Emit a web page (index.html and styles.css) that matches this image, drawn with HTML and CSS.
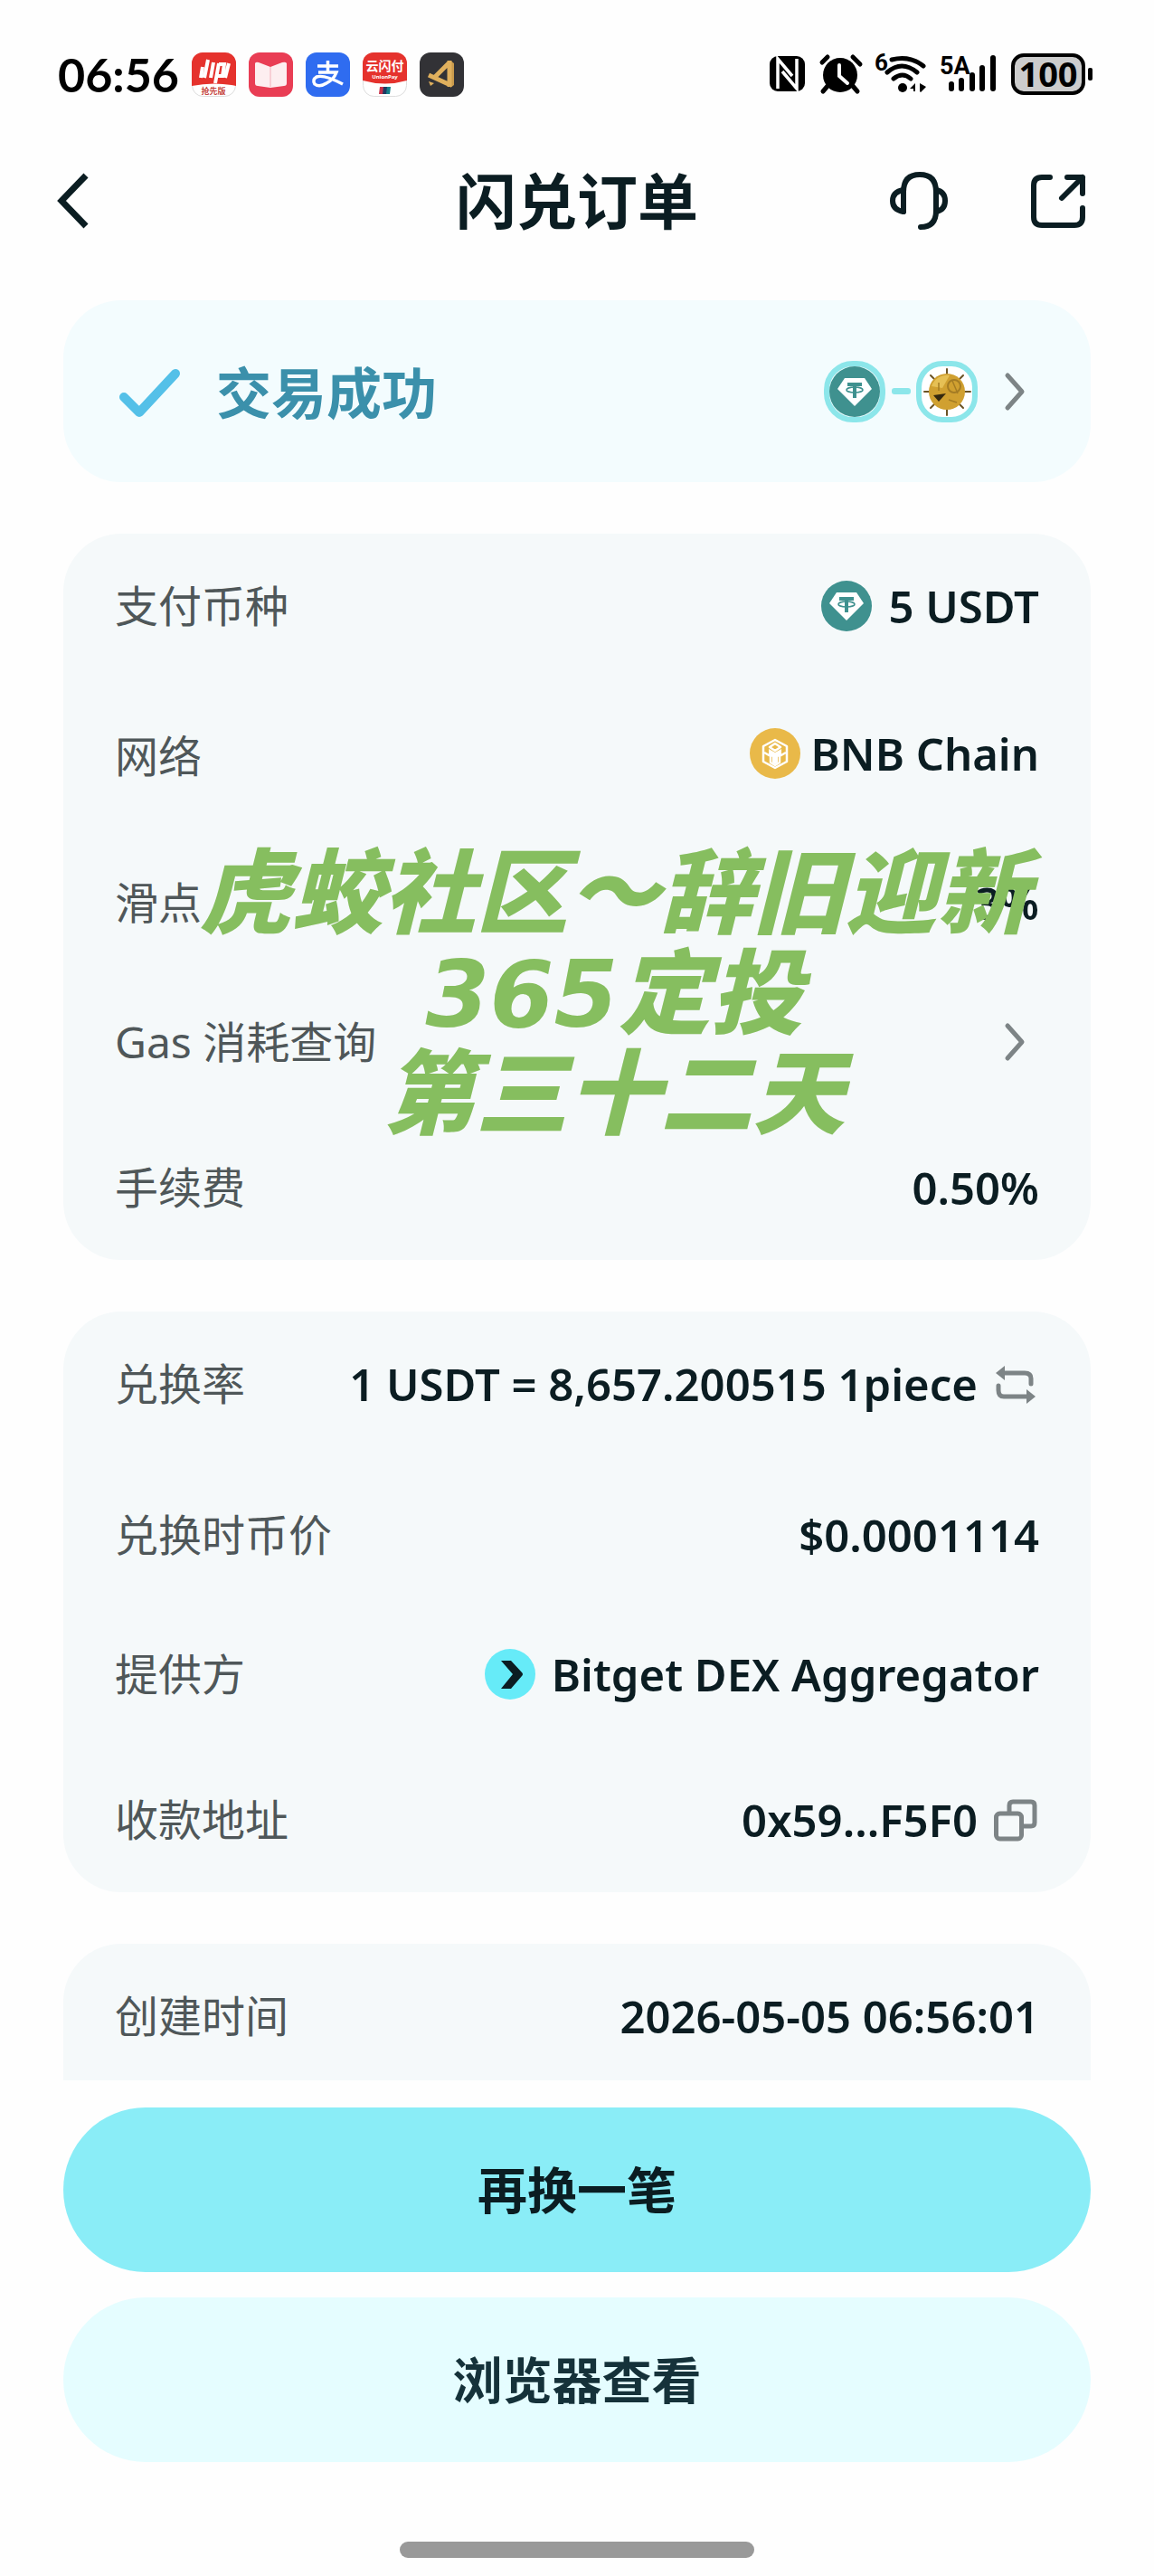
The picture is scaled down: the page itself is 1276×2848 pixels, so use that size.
FILE: index.html
```html
<!DOCTYPE html>
<html lang="zh-CN">
<head>
<meta charset="utf-8">
<meta name="viewport" content="width=device-width, initial-scale=1">
<title>闪兑订单</title>
<link rel="stylesheet" href="styles.css">
</head>
<body>
<svg class="defs" aria-hidden="true">
  <symbol id="usdt" viewBox="0 0 56 56">
    <circle cx="28" cy="28" r="28" fill="#3f918f"/>
    <path d="M17 13h22l8 12-19 19L9 25z" fill="#fff"/>
    <path d="M20 18h16v4h-6v13h-4V22h-6z" fill="#3f918f"/>
    <ellipse cx="28" cy="26" rx="9" ry="3" fill="none" stroke="#3f918f" stroke-width="1.6"/>
  </symbol>
  <symbol id="chevron" viewBox="0 0 48 48">
    <path d="M15 6l16 18-16 18" fill="none" stroke="currentColor" stroke-width="5" stroke-linecap="round" stroke-linejoin="round"/>
  </symbol>
</svg>

<div class="status">
  <div class="status-side">
    <time class="clock">06:56</time>
    <div class="apps">
      <svg class="app" viewBox="0 0 49 49" aria-hidden="true">
        <rect x=".5" y=".5" width="48" height="48" rx="12" fill="#fff" stroke="#ddd"/>
        <path d="M0 37V12A12 12 0 0 1 12 0h25a12 12 0 0 1 12 12v25q-24-5-49 0z" fill="#e5322d"/>
        <path d="M12 16l-2 12M18 8l-4 20M24 11l-3 17M30 12l-4 22M30 13h6l-2 13h-6M41 12l-4 16" fill="none" stroke="#fff" stroke-width="4"/>
        <text x="24" y="46" text-anchor="middle" font-size="9" font-weight="700" fill="#c5453e">抢先版</text>
      </svg>
      <svg class="app" viewBox="0 0 49 49" aria-hidden="true">
        <rect width="49" height="49" rx="12" fill="#e93d54"/>
        <path d="M7 12q1-2 4-1l13 5 13-5q4-1 5 1v22q0 3-3 3l-15 2-14-2q-3 0-3-3z" fill="#fdeef0"/>
        <path d="M24 16v22" stroke="#f6c5cc" stroke-width="1.5"/>
      </svg>
      <svg class="app" viewBox="0 0 49 49" aria-hidden="true">
        <rect width="49" height="49" rx="12" fill="#2f6cf0"/>
        <path d="M13 15h23M24.500 9v13M14 22h20q-3 8-11 12-8 5-13 1-3-5 2-8 8-3 29 8" fill="none" stroke="#fff" stroke-width="3.500"/>
      </svg>
      <svg class="app" viewBox="0 0 49 49" aria-hidden="true">
        <rect x=".5" y=".5" width="48" height="48" rx="12" fill="#fff" stroke="#ddd"/>
        <path d="M0 31V12A12 12 0 0 1 12 0h25a12 12 0 0 1 12 12v19q-24 7-49 0z" fill="#e5322d"/>
        <text x="24.500" y="20" text-anchor="middle" font-size="14" font-weight="700" fill="#fff">云闪付</text>
        <text x="24.500" y="29" text-anchor="middle" font-size="6" font-weight="700" fill="#fff">UnionPay</text>
        <path d="M19 38h5l-1 8h-5z" fill="#c8324a"/><path d="M23 38h5l-1 8h-5z" fill="#1f3b63"/><path d="M27 38h4l-1 8h-4z" fill="#15808a"/>
      </svg>
      <svg class="app" viewBox="0 0 49 49" aria-hidden="true">
        <rect width="49" height="49" rx="12" fill="#323236"/>
        <path d="M34 9v30l4-3V12z" fill="#c99a4c"/>
        <path d="M32 12L15 29M10 25l24 11M33 9v29" fill="none" stroke="#e0b05d" stroke-width="5"/>
        <path d="M10 32l6 2-4 3z" fill="#e0b05d"/>
      </svg>
    </div>
  </div>
  <svg class="signals" viewBox="0 0 360 50" aria-hidden="true">
    <rect x="1" y="5" width="39" height="39" rx="9"/>
    <path d="M10 41V8l16 19M31 8v33L15 22" fill="none" stroke="#fff" stroke-width="3.500"/>
    <circle cx="79" cy="26" r="19"/>
    <path d="M66 37l-6 7M92 37l6 7M59 12l6-6M93 6l8 8" stroke="#000" stroke-width="5" stroke-linecap="round"/>
    <path d="M78 15v12l9 8" fill="none" stroke="#fff" stroke-width="4" stroke-linecap="round"/>
    <g fill="none" stroke="#000" stroke-width="5" stroke-linecap="round">
      <path d="M136 9q20-5 35 7M131 23q16-14 33 0M138 30q10-8 19 0"/>
    </g>
    <circle cx="148" cy="40" r="5"/>
    <path d="M156 41l6-6v9h-2v-3zM167 35l7 4-6 6-1-1z"/>
    <text class="net" x="117" y="21" font-size="26">6</text>
    <text class="net" x="189" y="25" font-size="27">5A</text>
    <path d="M202 36v5M213 32v9M225 26v15M236 18v23M248 7v34" stroke="#000" stroke-width="6" stroke-linecap="round"/>
    <rect x="270" y="4" width="78" height="42" rx="12" fill="#ccc" stroke="#000" stroke-width="4"/>
    <rect x="353" y="18" width="5" height="14" rx="2"/>
    <text x="309" y="39" text-anchor="middle" font-size="38" font-weight="700">100</text>
  </svg>
</div>

<header class="topbar">
  <button class="icon-btn" type="button" aria-label="返回">
    <svg viewBox="0 0 64 64"><path d="M33 4L6 32l27 28" fill="none" stroke="currentColor" stroke-width="7"/></svg>
  </button>
  <h1>闪兑订单</h1>
  <div class="actions">
    <button class="icon-btn" type="button" aria-label="客服">
      <svg viewBox="0 0 64 64"><g fill="none" stroke="currentColor" stroke-width="6" stroke-linecap="round" stroke-linejoin="round"><path d="M15 44V22Q15 3 33 3t18 19v21Q51 61 34 61"/><path d="M15 20Q3 22 3 32t12 12M51 20q10 2 10 12T51 44"/></g></svg>
    </button>
    <button class="icon-btn" type="button" aria-label="分享">
      <svg viewBox="0 0 64 64"><g fill="none" stroke="currentColor" stroke-width="6" stroke-linecap="round" stroke-linejoin="round"><path d="M23 6H14Q5 6 5 15v35q0 9 9 9h36q9 0 9-9V40M42 6h17v18M59 6L36 29"/></g></svg>
    </button>
  </div>
</header>

<main class="content">
  <section class="card result">
    <svg class="check" viewBox="0 0 72 64" aria-hidden="true"><path d="M10 38l17 17L67 12" fill="none" stroke="#54c0e8" stroke-width="10" stroke-linecap="round" stroke-linejoin="round"/></svg>
    <h2>交易成功</h2>
    <svg class="pair" viewBox="0 0 170 68" aria-hidden="true">
      <rect x="3" y="3" width="62" height="62" rx="29" fill="#eefbfd" stroke="#8ce6ea" stroke-width="6"/>
      <use href="#usdt" x="6" y="6" width="56" height="56"/>
      <rect x="75" y="30" width="21" height="7" rx="3" fill="#8ce6ea"/>
      <rect x="105" y="3" width="62" height="62" rx="26" fill="#fff" stroke="#8ce6ea" stroke-width="6"/>
      <path d="M136 9v51M111 34h51M118 16l36 36M154 16l-36 36" stroke="#6b5324" stroke-width="2" stroke-linecap="round"/>
      <circle cx="136" cy="34" r="20" fill="#d0a030"/>
      <path d="M119 28a18 18 0 0 1 20-12l-8 14z" fill="#e6c055"/>
      <path d="M121 38l14-2-8 9z" fill="#35290f"/>
      <circle cx="144" cy="28" r="7" fill="none" stroke="#a47c24" stroke-width="2"/>
      <path d="M127 24v9M142 22l6 14M138 43l9 3" stroke="#a47c24" stroke-width="1.500"/>
    </svg>
    <button class="more" type="button" aria-label="查看交易详情"><svg><use href="#chevron"/></svg></button>
  </section>

  <section class="card">
    <dl>
      <div class="row">
        <dt>支付币种</dt>
        <dd><svg class="coin" aria-hidden="true"><use href="#usdt"/></svg>5 USDT</dd>
      </div>
      <div class="row row-wide row-top">
        <dt>网络</dt>
        <dd class="close"><svg class="coin" viewBox="0 0 56 56" aria-hidden="true"><circle cx="28" cy="28" r="28" fill="#e9b949"/><g fill="none" stroke="#fff" stroke-width="2.500" stroke-linejoin="round"><path d="M28 13l13 7v17l-13 7-13-7V20z"/><path d="M28 17l6 4-6 4-6-4zM16 27l7 4v7l5 3 5-3v-7l7-4"/></g><path d="M21 23l7 4 7-4v7l-4 2v6l-3 2-3-2v-6l-4-2z" fill="#fff"/></svg>BNB Chain</dd>
      </div>
      <div class="row">
        <dt>滑点</dt>
        <dd>3%</dd>
      </div>
      <div class="row row-tight">
        <dt>Gas 消耗查询</dt>
        <dd><button class="more" type="button" aria-label="Gas 消耗查询"><svg><use href="#chevron"/></svg></button></dd>
      </div>
      <div class="row">
        <dt>手续费</dt>
        <dd>0.50%</dd>
      </div>
    </dl>
    <p class="stamp">虎蛟社区～辞旧迎新<br>365定投<br>第三十二天</p>
  </section>

  <section class="card">
    <dl>
      <div class="row">
        <dt>兑换率</dt>
        <dd>1 USDT = 8,657.200515 1piece
          <button class="more" type="button" aria-label="切换兑换率"><svg viewBox="0 0 48 48"><path d="M9 12h25q7 0 7 6v6M5 26v5q0 7 6 7h25" fill="none" stroke="currentColor" stroke-width="5" stroke-linecap="round"/><path d="M2 12l10-8v16zM46 38l-10-8v16z" fill="currentColor"/></svg></button>
        </dd>
      </div>
      <div class="row row-wide">
        <dt>兑换时币价</dt>
        <dd>$0.0001114</dd>
      </div>
      <div class="row row-tight">
        <dt>提供方</dt>
        <dd><svg class="coin" viewBox="0 0 56 56" aria-hidden="true"><circle cx="28" cy="28" r="28" fill="#66ebf8"/><path d="M18 13h11l12 13q2 2 0 4L29 44H18l13-16z" fill="#0b1d22"/></svg>Bitget DEX Aggregator</dd>
      </div>
      <div class="row">
        <dt>收款地址</dt>
        <dd>0x59...F5F0
          <button class="more" type="button" aria-label="复制地址"><svg viewBox="0 0 48 48"><g fill="none" stroke="currentColor" stroke-width="5"><rect x="2.500" y="17" width="28" height="28" rx="4"/><path d="M17 17V8q0-4 4-4h20q4 0 4 4v19q0 4-4 4H31"/></g></svg></button>
        </dd>
      </div>
    </dl>
  </section>

  <section class="card card-cut">
    <dl>
      <div class="row">
        <dt>创建时间</dt>
        <dd>2026-05-05 06:56:01</dd>
      </div>
    </dl>
  </section>
</main>

<footer class="footer">
  <button class="btn btn-primary" type="button">再换一笔</button>
  <button class="btn btn-soft" type="button">浏览器查看</button>
  <div class="home-bar"></div>
</footer>
</body>
</html>
```

FILE: styles.css
```css
* { box-sizing: border-box; }

body {
  margin: 0;
  min-height: 100vh;
  display: flex;
  flex-direction: column;
  background: #fefefe;
  color: #0b1d22;
  font-family: "Noto Sans", "Noto Sans CJK SC", sans-serif;
}

h1, h2, dl, dt, dd, p { margin: 0; }

button {
  border: 0;
  padding: 0;
  background: none;
  color: inherit;
  font: inherit;
  cursor: pointer;
}

svg { display: block; }

.defs { position: absolute; width: 0; height: 0; }

/* Status bar */
.status {
  display: flex;
  align-items: center;
  justify-content: space-between;
  height: 110px;
  padding: 54px 66px 0 64px;
  color: #000;
}

.status-side { display: flex; align-items: center; gap: 14px; }

.clock {
  font-family: Lato, sans-serif;
  font-size: 52px;
  font-weight: 700;
  line-height: 56px;
}

.apps { display: flex; gap: 14px; }
.app { width: 49px; height: 49px; }
.signals { width: 360px; height: 50px; overflow: visible; }
.net { font-family: Roboto, sans-serif; font-weight: 700; }

/* Title bar */
.topbar {
  display: grid;
  grid-template-columns: 1fr auto 1fr;
  align-items: center;
  height: 84px;
  margin: 70px 62px 68px;
}

.topbar h1 {
  font-size: 67px;
  font-weight: 600;
  line-height: 84px;
}

.icon-btn { width: 64px; height: 64px; }
.icon-btn svg { width: 64px; height: 64px; }
.actions { display: flex; justify-content: flex-end; gap: 90px; padding-right: 12px; }

/* Cards */
.content {
  flex: 1;
  display: flex;
  flex-direction: column;
  gap: 57px;
  padding: 0 70px;
}

.card {
  position: relative;
  padding: 48px 57px;
  border-radius: 64px;
  background: #f5f9fa;
}

.card-cut {
  padding-bottom: 39px;
  border-radius: 64px 64px 0 0;
}

.result {
  display: flex;
  align-items: center;
  height: 201px;
  background: #f3fcfe;
}

.result h2 {
  flex: 1;
  margin-left: 40px;
  padding-top: 4px;
  color: #3b90ab;
  font-size: 61px;
  font-weight: 600;
  line-height: 84px;
}

.check { width: 72px; height: 64px; }
.pair { width: 170px; height: 68px; margin-right: 18px; }
.more { width: 50px; color: #7d8486; }
.more svg { width: 48px; height: 48px; }

.row {
  display: flex;
  align-items: center;
  justify-content: space-between;
  height: 64px;
}

.row + .row { margin-top: 97px; }
.row + .row-wide { margin-top: 103px; }
.row + .row-tight { margin-top: 90px; }
.row-top { align-items: flex-start; }

dt, dd { white-space: nowrap; }

dt {
  color: #4f5759;
  font-size: 48px;
  line-height: 62px;
}

dd {
  display: flex;
  align-items: center;
  gap: 18px;
  font-size: 49px;
  font-weight: 600;
  line-height: 56px;
}

dd.close { gap: 12px; }
.coin { width: 56px; height: 56px; }

/* Caption lying over the order details */
.stamp {
  position: absolute;
  top: 343px;
  right: 68px;
  color: #86be5f;
  font-family: "DejaVu Sans", "Noto Sans CJK SC", sans-serif;
  font-size: 102px;
  font-style: italic;
  font-weight: 900;
  line-height: 111px;
  text-align: center;
  white-space: nowrap;
}

/* Footer */
.footer {
  display: flex;
  flex-direction: column;
  gap: 28px;
  padding: 29px 70px 20px;
}

.btn {
  height: 182px;
  padding-bottom: 6px;
  border-radius: 91px;
  font-size: 55px;
  font-weight: 600;
}

.btn-primary { background: #8aedf7; }
.btn-soft { background: #e5fdff; color: #15323a; }

.home-bar {
  align-self: center;
  width: 392px;
  height: 18px;
  margin-top: 60px;
  border-radius: 9px;
  background: #999;
}
```
